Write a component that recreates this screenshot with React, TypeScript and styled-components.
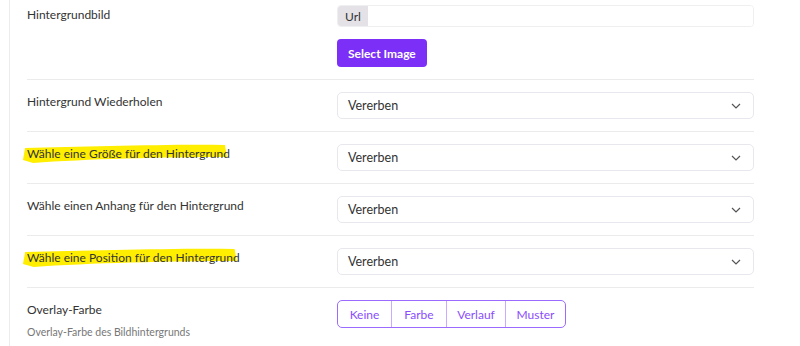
import React from 'react';
import styled, { createGlobalStyle } from 'styled-components';

const GlobalStyle = createGlobalStyle`
  body {
    margin: 0;
    background: #ffffff;
    font-family: Lato, 'Noto Sans', sans-serif;
    color: #333;
  }
`;

const Panel = styled.div`
  margin-left: 9px;
  width: 762px;
  border-left: 1px solid #ececec;
  border-right: 1px solid #ececec;
  padding: 0 17px;
  box-sizing: content-box;
  background: #fff;
  height: 346px;
  overflow: hidden;
`;

const Row = styled.div<{ first?: boolean }>`
  display: grid;
  grid-template-columns: 310px 1fr;
  padding: ${p => (p.first ? '5px 0 12px' : '12px 0')};
  border-top: ${p => (p.first ? 'none' : '1px solid #ebebeb')};
  width: 727px;
`;

const LabelCol = styled.div<{ gap?: number }>`
  display: flex;
  flex-direction: column;
  gap: ${p => p.gap ?? 12}px;
  padding-top: 2px;
`;

const Label = styled.span`
  position: relative;
  z-index: 0;
  font-size: 12px;
  line-height: 16px;
  color: #333;
  align-self: flex-start;
`;

const Hint = styled.span`
  font-size: 10.5px;
  line-height: 14px;
  color: #777;
`;

const Marker = styled.svg`
  position: absolute;
  left: -4px;
  top: -3px;
  width: calc(100% + 1px);
  height: 20px;
  z-index: -1;
`;

const Controls = styled.div`
  display: flex;
  flex-direction: column;
  align-items: flex-start;
  gap: 12px;
`;

const InputGroup = styled.div`
  display: flex;
  width: 100%;
  height: 22px;
  border: 1px solid #efeff2;
  border-radius: 4px;
  overflow: hidden;
  box-sizing: border-box;
`;

const Addon = styled.span`
  display: flex;
  align-items: center;
  padding: 0 7px;
  background: #e4e2e7;
  font-size: 12px;
  color: #333;
`;

const TextField = styled.input`
  flex: 1;
  border: none;
  outline: none;
  background: #fff;
`;

const PrimaryButton = styled.button`
  height: 28px;
  padding: 0 11px;
  border: none;
  border-radius: 4px;
  background: #7b2ff7;
  color: #fff;
  font-family: inherit;
  font-size: 12px;
  font-weight: 700;
`;

const Select = styled.div`
  display: flex;
  align-items: center;
  justify-content: space-between;
  width: 100%;
  height: 27px;
  padding: 0 12px 0 10px;
  box-sizing: border-box;
  border: 1px solid #e8e7ee;
  border-radius: 5px;
  font-size: 12.5px;
  color: #333;
`;

const Segmented = styled.div`
  display: flex;
  height: 28px;
  border: 1px solid #9b6bff;
  border-radius: 5px;
  overflow: hidden;
  box-sizing: border-box;
`;

const Segment = styled.span<{ w: number }>`
  display: flex;
  align-items: center;
  justify-content: center;
  flex: 0 0 ${p => p.w}px;
  font-size: 12px;
  color: #8a4dfd;
  & + & {
    border-left: 1px solid #c8acff;
  }
`;

const Chevron = () => (
  <svg width="10" height="6" viewBox="0 0 10 6">
    <path d="M1 1l4 4 4-4" fill="none" stroke="#555" strokeWidth="1.2" />
  </svg>
);

const Highlight = () => (
  <Marker viewBox="0 0 200 20" preserveAspectRatio="none">
    <path d="M2 5 C 60 4, 140 1, 198 2 L 200 14 C 140 14, 60 16, 10 20 L 0 17 Z" fill="#ffee00" />
  </Marker>
);

const selectRows: { label: string; marked?: boolean }[] = [
  { label: 'Hintergrund Wiederholen' },
  { label: 'Wähle eine Größe für den Hintergrund', marked: true },
  { label: 'Wähle einen Anhang für den Hintergrund' },
  { label: 'Wähle eine Position für den Hintergrund', marked: true },
];

const App: React.FC = () => (
  <>
    <GlobalStyle />
    <Panel>
      <Row first>
        <LabelCol>
          <Label>Hintergrundbild</Label>
        </LabelCol>
        <Controls>
          <InputGroup>
            <Addon>Url</Addon>
            <TextField />
          </InputGroup>
          <PrimaryButton>Select Image</PrimaryButton>
        </Controls>
      </Row>
      {selectRows.map(r => (
        <Row key={r.label}>
          <LabelCol>
            <Label>
              {r.marked && <Highlight />}
              {r.label}
            </Label>
          </LabelCol>
          <Controls>
            <Select>
              Vererben
              <Chevron />
            </Select>
          </Controls>
        </Row>
      ))}
      <Row>
        <LabelCol gap={7}>
          <Label>Overlay-Farbe</Label>
          <Hint>Overlay-Farbe des Bildhintergrunds</Hint>
        </LabelCol>
        <Controls>
          <Segmented>
            <Segment w={53}>Keine</Segment>
            <Segment w={54}>Farbe</Segment>
            <Segment w={58}>Verlauf</Segment>
            <Segment w={59}>Muster</Segment>
          </Segmented>
        </Controls>
      </Row>
    </Panel>
  </>
);

export default App;
